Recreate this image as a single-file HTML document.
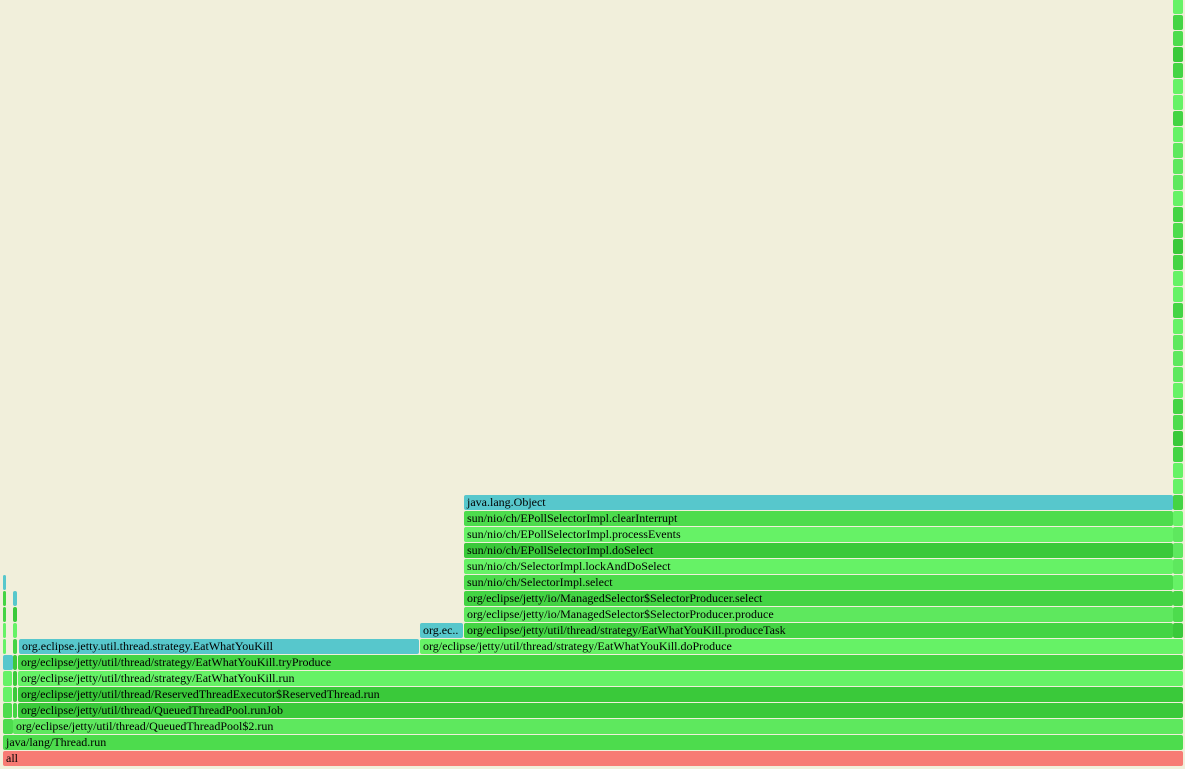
<!DOCTYPE html>
<html><head><meta charset="utf-8"><style>
body{margin:0;width:1185px;height:769px;background:#f1efdb;position:relative;overflow:hidden;font-family:"Liberation Serif",serif;font-size:12px}
.b{position:absolute;height:15px;border-radius:2px;line-height:15px;white-space:nowrap;overflow:hidden;color:#000;padding-left:3px;box-sizing:border-box}
</style></head><body>
<script>
const G=['#4ddc4d','#66f266','#3ac93a','#55e455','#44d444','#5eec5e'];
const T='#57c7cc',R='#f77b74';
function b(l,x,w,c,t){document.write(`<div class="b" style="top:${751-16*l}px;left:${x}px;width:${w}px;background:${c}">${t||''}</div>`)}
b(0,3,1180,R,'all');
b(1,3,1180,'#4ddc4d','java/lang/Thread.run');
b(2,3,10,'#4ddc4d');b(2,13,1170,'#5ee85e','org/eclipse/jetty/util/thread/QueuedThreadPool$2.run');
b(3,3,9,'#4ddc4d');b(3,13,4,'#44d444');b(3,18,1165,'#3ac93a','org/eclipse/jetty/util/thread/QueuedThreadPool.runJob');
b(4,3,9,'#66f266');b(4,13,4,'#3ac93a');b(4,18,1165,'#3ac93a','org/eclipse/jetty/util/thread/ReservedThreadExecutor$ReservedThread.run');
b(5,3,9,'#66f266');b(5,13,4,'#3ac93a');b(5,18,1165,'#66f266','org/eclipse/jetty/util/thread/strategy/EatWhatYouKill.run');
b(6,3,10,T);b(6,13,4,'#3ac93a');b(6,18,1165,'#44d444','org/eclipse/jetty/util/thread/strategy/EatWhatYouKill.tryProduce');
b(7,3,1,'#66f266');b(7,13,4,'#44d444');b(7,19,400,T,'org.eclipse.jetty.util.thread.strategy.EatWhatYouKill');b(7,420,763,'#66f266','org/eclipse/jetty/util/thread/strategy/EatWhatYouKill.doProduce');
b(8,3,1,'#66f266');b(8,13,4,'#66f266');b(8,420,43,T,'org.ec..');b(8,464,709,'#44d444','org/eclipse/jetty/util/thread/strategy/EatWhatYouKill.produceTask');
b(9,3,1,'#44d444');b(9,13,4,'#3ac93a');b(9,464,709,'#5ee85e','org/eclipse/jetty/io/ManagedSelector$SelectorProducer.produce');
b(10,3,1,'#44d444');b(10,13,4,T);b(10,464,709,'#44d444','org/eclipse/jetty/io/ManagedSelector$SelectorProducer.select');
b(11,3,1,T);b(11,464,709,'#4ddc4d','sun/nio/ch/SelectorImpl.select');
b(12,464,709,'#66f266','sun/nio/ch/SelectorImpl.lockAndDoSelect');
b(13,464,709,'#3ac93a','sun/nio/ch/EPollSelectorImpl.doSelect');
b(14,464,709,'#66f266','sun/nio/ch/EPollSelectorImpl.processEvents');
b(15,464,709,'#4ddc4d','sun/nio/ch/EPollSelectorImpl.clearInterrupt');
b(16,464,709,T,'java.lang.Object');
const rc=['#5ee85e','#44d444','#5ee85e','#4ddc4d','#44d444','#66f266','#66f266','#5ee85e','#3ac93a','#66f266','#44d444','#66f266'];
for(let l=8;l<=47;l++)b(l,1173,10,rc[(l*7)%rc.length]);
</script>
</body></html>
